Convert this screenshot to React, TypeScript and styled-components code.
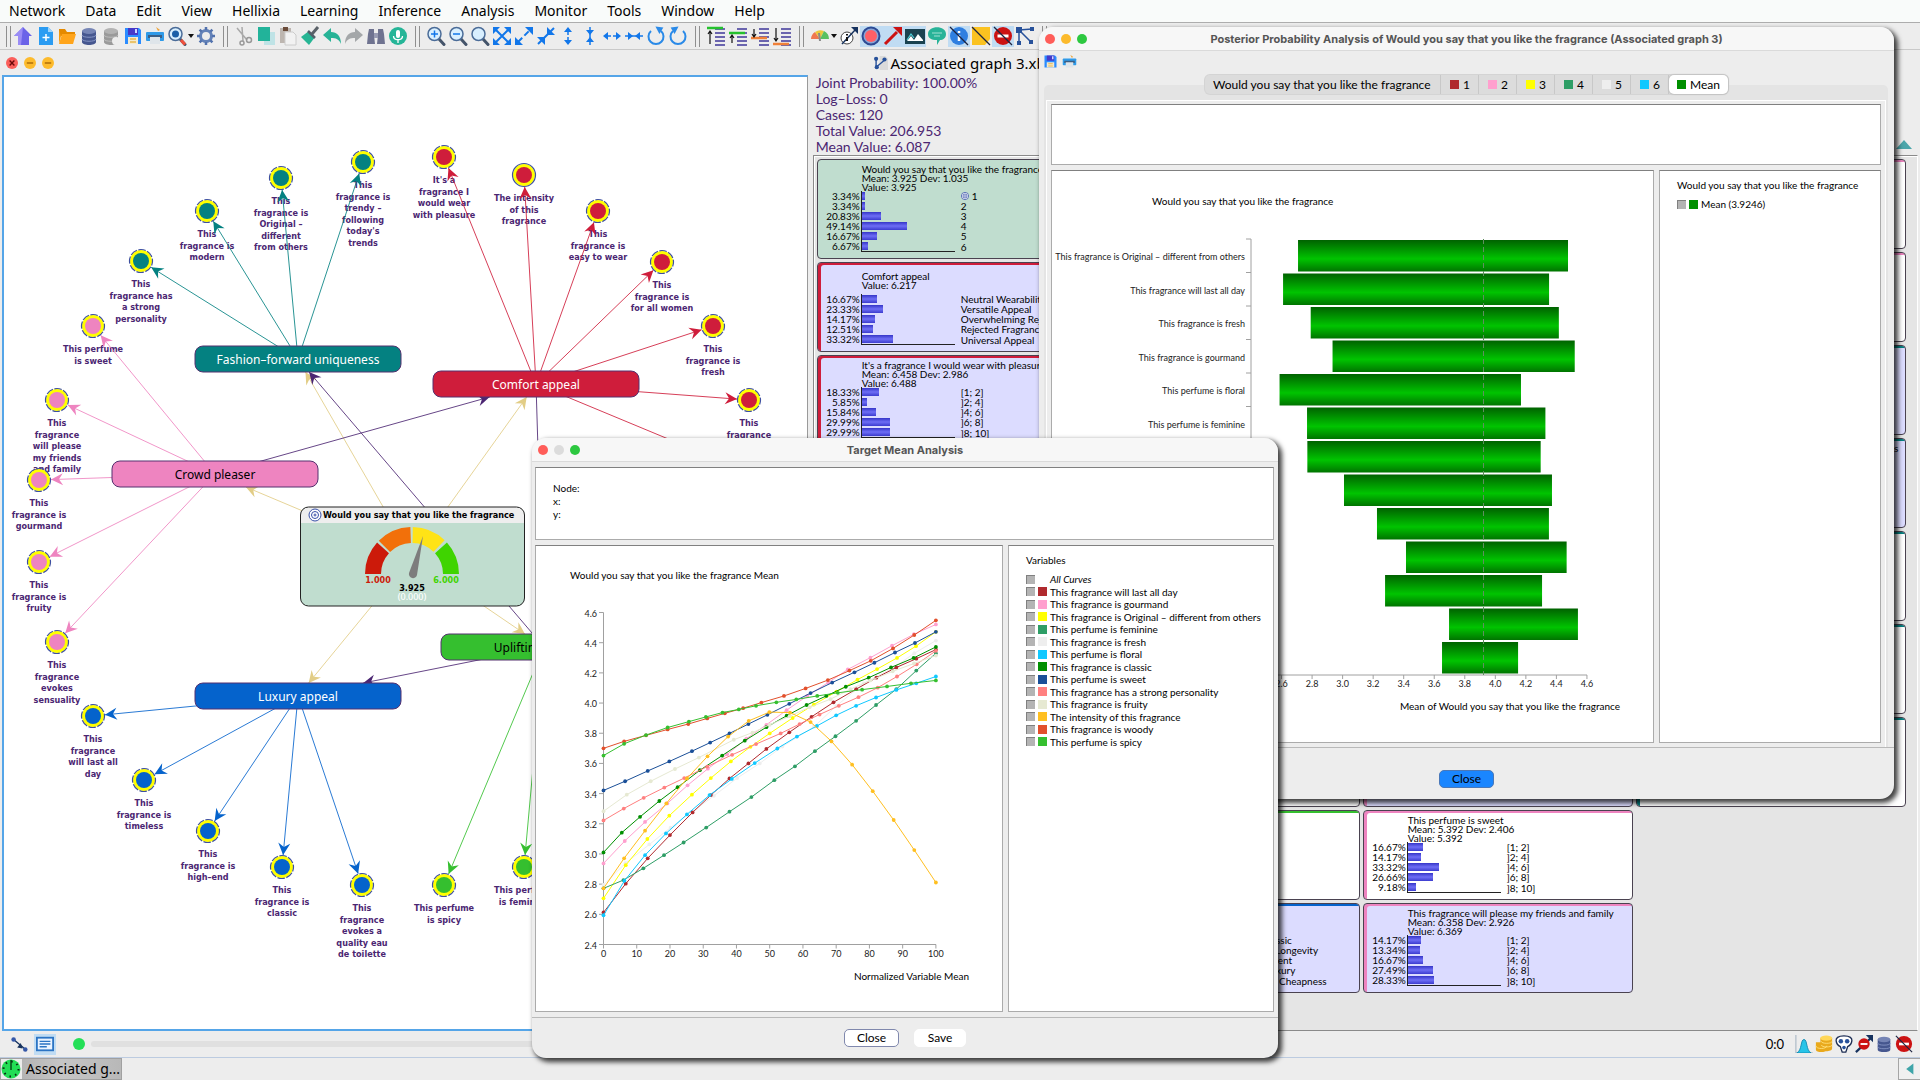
import React from "react";
import styled, { createGlobalStyle } from "styled-components";

const UI = `Lato, "Noto Sans", sans-serif`;
const NOTO = `"Noto Sans", Lato, sans-serif`;
const BOLD = `"DejaVu Sans Condensed", "DejaVu Sans", sans-serif`;
const PURPLE = "#4b2672";

const Global = createGlobalStyle`
  *, *::before, *::after { box-sizing: border-box; }
  body { margin: 0; background: #ededed; font-family: ${UI}; color: #000; overflow: hidden; }
  button { font-family: inherit; color: inherit; }
  ul { list-style: none; margin: 0; padding: 0; }
`;

/* ---------- application shell ---------- */

const Shell = styled.div`
  position: relative;
  display: flex;
  flex-direction: column;
  height: 100vh;
  overflow: hidden;
`;

const MenuBar = styled.nav`
  display: flex;
  align-items: center;
  gap: 20px;
  height: 23px;
  flex: none;
  padding: 0 9px;
  background: #f9fbfa;
  border-bottom: 1px solid #adadad;
`;

const MenuItem = styled.button`
  border: 0;
  padding: 0;
  background: none;
  font: 14px/22px ${NOTO};
`;

const ToolBar = styled.div`
  display: flex;
  align-items: center;
  height: 27px;
  flex: none;
  padding-left: 4px;
  border-bottom: 1px solid #c9c9c9;
`;

const Grip = styled.span<{ $w?: number }>`
  display: flex;
  justify-content: center;
  width: ${(p) => p.$w ?? 16}px;
  height: 21px;
  &::before {
    content: "";
    width: 5px;
    border: solid #8f8f8f;
    border-width: 0 1px;
  }
`;

const ToolButton = styled.button<{ $on?: boolean }>`
  display: flex;
  align-items: center;
  justify-content: center;
  gap: 1px;
  min-width: 22px;
  height: 21px;
  border: 0;
  padding: 0 1px;
  background: ${(p) => (p.$on ? "#c0dcf3" : "transparent")};
`;

const Caret = styled.span`
  border: 3px solid transparent;
  border-top: 4px solid #111;
  border-bottom: 0;
`;

const FrameTitle = styled.header`
  display: grid;
  grid-template-columns: 1fr auto 1fr;
  align-items: center;
  height: 25px;
  flex: none;
  padding: 0 2px 0 6px;
`;

const Dots = styled.div`
  display: flex;
  gap: 6px;
`;

const FrameDot = styled.button<{ $c: string }>`
  display: flex;
  align-items: center;
  justify-content: center;
  width: 12px;
  height: 12px;
  border: 0;
  padding: 0;
  border-radius: 50%;
  background: ${(p) => p.$c};
`;

const FrameName = styled.h1`
  display: flex;
  align-items: center;
  gap: 2px;
  margin: 0;
  font: 15px/24px ${NOTO};
`;

const Work = styled.main`
  display: flex;
  flex: 1;
  min-height: 0;
  padding: 0 2px;
`;

const Canvas = styled.section`
  width: calc(42% + 1px);
  flex: none;
  background: #fff;
  border: 2px solid #55a5e8;
  border-right: 1px solid #9a9a9a;
  overflow: hidden;
  svg { display: block; }
`;

const Side = styled.aside`
  display: flex;
  flex-direction: column;
  flex: 1;
  min-width: 0;
  padding-left: 5px;
`;

const Stats = styled.div`
  display: flex;
  justify-content: space-between;
  align-items: flex-end;
  padding: 0 6px 0 3px;
  font: 14px/16px ${UI};
  color: ${PURPLE};
`;

const Up = styled.button`
  width: 16px;
  height: 9px;
  margin-bottom: 6px;
  border: 0;
  padding: 0;
  background: #4ba6ab;
  clip-path: polygon(50% 0, 100% 100%, 0 100%);
`;

const Monitors = styled.div`
  display: flex;
  align-items: flex-start;
  gap: 3px;
  flex: 1;
  min-height: 0;
  padding: 3px;
  background: #e5e5e5;
  border: 1px solid #8a8a8a;
  border-right-color: #fff;
  box-shadow: inset 1px 1px 0 #fff;
  overflow: hidden;
`;

const Column = styled.div`
  display: flex;
  flex-direction: column;
  gap: 3px;
  width: 270px;
  flex: none;
`;

const Card = styled.article<{ $c?: string; $bg: string; $rows?: number }>`
  width: 100%;
  height: ${(p) => ((p.$rows ?? 5) > 5 ? 100 : 90)}px;
  flex: none;
  border: 1px solid #4a4250;
  border-radius: 4px;
  background: ${(p) => p.$bg};
  box-shadow: inset 3px 2px 0 ${(p) => p.$c ?? "transparent"};
  font: 10px/10px ${UI};
  overflow: hidden;
  white-space: nowrap;
`;

const CardHead = styled.div`
  display: flex;
  flex-direction: column;
  justify-content: center;
  height: 31px;
  padding: 5px 0 0 44px;
  line-height: 9px;
`;

const Row = styled.li`
  display: grid;
  grid-template-columns: 42px 94px auto;
  column-gap: 1px;
  height: 10px;
  &:last-child > :nth-child(2) { border-bottom: 1px solid #222; height: 11px; }
`;

const Pct = styled.span`
  text-align: right;
`;

const Track = styled.span`
  border-left: 1px solid #222;
  padding-top: 1px;
`;

const Fill = styled.span`
  display: block;
  height: 8px;
  background: linear-gradient(#3535c8, #6e6ef5 50%, #3c3ccf);
`;

const State = styled.span`
  display: flex;
  align-items: center;
  gap: 3px;
  padding-left: 5px;
`;

const StatusBar = styled.footer`
  display: flex;
  align-items: center;
  height: 27px;
  flex: none;
  padding: 0 7px 0 8px;
  border-bottom: 1px solid #bccbe0;
`;

const Rail = styled.div`
  width: 40%;
  height: 6px;
  margin-left: 6px;
  border-radius: 3px;
  background: #e0e0e0;
`;

const Knob = styled.span`
  width: 12px;
  height: 12px;
  margin-left: 17px;
  border-radius: 50%;
  background: #24df57;
`;

const Tray = styled.div`
  display: flex;
  align-items: center;
  margin-left: auto;
  font: 13px/20px ${UI};
  svg { margin-left: 2px; }
  span { margin-right: 9px; }
`;

const TaskBar = styled.footer`
  display: flex;
  justify-content: space-between;
  height: 22px;
  flex: none;
`;

const Task = styled.button`
  display: flex;
  align-items: center;
  gap: 4px;
  width: 122px;
  height: 22px;
  border: 1px solid #a0a0a0;
  padding: 0;
  background: linear-gradient(90deg, #aaa, #c6c6c6 50%, #b8b8b8);
  font: 14px/20px ${NOTO};
  white-space: nowrap;
`;

const TaskIcon = styled.span`
  display: flex;
  width: 21px;
  height: 20px;
  background: #ebebeb;
`;

const Corner = styled.button`
  display: flex;
  align-items: center;
  justify-content: flex-end;
  width: 22px;
  border: 1px solid #a5a5a5;
  border-width: 1px 0 1px 1px;
  padding: 0 5px;
  background: #f0f0f0;
`;

/* ---------- floating windows ---------- */

const Win = styled.section<{ $x: number; $y: number; $w: number; $h: number }>`
  position: absolute;
  left: ${(p) => p.$x}px;
  top: ${(p) => p.$y}px;
  width: ${(p) => p.$w}px;
  min-height: ${(p) => p.$h}px;
  display: flex;
  flex-direction: column;
  border-radius: 14px;
  background: #ededed;
  box-shadow: 3px 3px 5px 1px rgba(0, 0, 0, 0.75);
  overflow: hidden;
`;

const WinBar = styled.header`
  display: grid;
  grid-template-columns: 1fr auto 1fr;
  align-items: center;
  height: 24px;
  flex: none;
  padding: 0 6px;
  background: #f7f7f7;
  border-bottom: 1px solid #dadada;
`;

const WinTitle = styled.h2`
  margin: 0;
  font: 700 11px/22px Inter, sans-serif;
  color: #555;
`;

const Light = styled.button<{ $c: string }>`
  width: 10px;
  height: 10px;
  border: 0;
  padding: 0;
  border-radius: 50%;
  background: ${(p) => p.$c};
`;

const WinTools = styled.div`
  display: flex;
  gap: 4px;
  height: 24px;
  padding: 3px 4px;
`;

const ToolIcon = styled.button`
  display: flex;
  border: 0;
  padding: 0;
  background: none;
`;

const TabBar = styled.div`
  position: relative;
  z-index: 1;
  display: flex;
  align-self: center;
  height: 19px;
  margin-bottom: -9px;
  border-radius: 5px;
  background: #dcdcdc;
  box-shadow: 0 0 0 1px #d4d4d4;
`;

const Tab = styled.button<{ $on?: boolean; $wide?: boolean }>`
  display: flex;
  align-items: center;
  justify-content: ${(p) => (p.$wide ? "flex-start" : "center")};
  gap: 4px;
  min-width: ${(p) => (p.$wide ? 236 : 38)}px;
  border: 0;
  padding: 0 8px;
  border-radius: ${(p) => (p.$on ? 5 : 0)}px;
  background: ${(p) => (p.$on ? "#fff" : "transparent")};
  box-shadow: ${(p) => (p.$on ? "0 0 1px 1px #c4c4c4" : "inset -1px 0 0 #c8c8c8")};
  font: 12px/19px ${UI};
`;

const Swatch = styled.i<{ $c: string }>`
  display: block;
  width: 9px;
  height: 9px;
  flex: none;
  background: ${(p) => p.$c};
`;

const Group = styled.div`
  display: flex;
  flex: 1;
  margin: 0 6px 0 5px;
  padding: 15px 2px 0;
  border-radius: 5px 5px 0 0;
  background: #e4e4e4;
`;

const Panes = styled.div<{ $boxed?: boolean }>`
  display: flex;
  flex-direction: column;
  flex: 1;
  gap: 5px;
  padding: ${(p) => (p.$boxed ? "3px 4px 4px" : "5px 4px 5px 3px")};
  background: #ededed;
  border: solid #fff;
  border-width: ${(p) => (p.$boxed ? "1px 1px 0" : "0")};
`;

const Split = styled.div<{ $side: number }>`
  display: grid;
  grid-template-columns: 1fr ${(p) => p.$side}px;
  gap: 5px;
  flex: 1;
`;

const Pane = styled.div<{ $h?: number }>`
  height: ${(p) => (p.$h ? p.$h + "px" : "auto")};
  background: #fff;
  border: 1px solid #ababab;
  border-top-color: #808080;
  overflow: hidden;
  svg { display: block; }
`;

const Readout = styled.div`
  padding: 14px 17px;
  font: 10px/13px ${UI};
`;

const Legend = styled.fieldset`
  margin: 0;
  border: 0;
  padding: 8px 0 0 17px;
  font: 10px/12px ${UI};
  white-space: nowrap;
  legend { float: left; width: 100%; padding: 0; margin-bottom: 7px; }
`;

const LegendList = styled.ul<{ $h: number }>`
  clear: both;
  display: grid;
  grid-auto-rows: 1fr;
  height: ${(p) => p.$h}px;
`;

const LegendItem = styled.label<{ $italic?: boolean }>`
  display: flex;
  align-items: center;
  gap: 3px;
  font-style: ${(p) => (p.$italic ? "italic" : "normal")};
`;

const Check = styled.input`
  appearance: none;
  width: 9px;
  height: 9px;
  margin: 0;
  background: #b4b4b4;
  border: solid #808080;
  border-width: 1px 0 0 1px;
`;

const WinFoot = styled.footer<{ $h: number; $drop?: number }>`
  display: flex;
  align-items: center;
  justify-content: center;
  gap: 15px;
  height: ${(p) => p.$h}px;
  padding-top: ${(p) => p.$drop ?? 0}px;
  flex: none;
  border-top: 1px solid #b9b9b9;
`;

const Push = styled.button<{ $kind?: "blue" | "ring" }>`
  height: 18px;
  min-width: 52px;
  padding: 0 12px;
  border: 1px solid ${(p) => (p.$kind === "blue" ? "#4a78b8" : p.$kind === "ring" ? "#8088ad" : "#fff")};
  border-radius: 5px;
  background: ${(p) => (p.$kind === "blue" ? "#1a86ff" : "#fff")};
  font: 12px/16px ${UI};
`;

/* ---------- icons ---------- */

const Ico = ({ s = 20, children }: { s?: number; children: React.ReactNode }) => (
  <svg width={s} height={s} viewBox="0 0 20 20" fill="none" aria-hidden="true">
    {children}
  </svg>
);

const Disk = (
  <>
    <path d="M2 2h14l2 2v14H2z" fill="#2b8cff" />
    <path d="M5 2h10v7H5z" fill="#4538c8" />
    <path d="M12 3h2v4h-2z" fill="#cfd8ff" />
    <path d="M5 11h10v7H5z" fill="#f3ead0" />
    <path d="M7 13h6M7 16h6" stroke="#e8b64a" strokeWidth="1.5" />
  </>
);
const Printer = (
  <>
    <path d="M5 2h9l1 6H5z" fill="#e9eef2" />
    <path d="M11 1l4 3-2 1z" fill="#f0a030" />
    <rect x="1" y="6" width="18" height="9" rx="1" fill="#2f9ae8" />
    <path d="M3 9h14v3H3z" fill="#3b5f86" />
    <path d="M5 11h10v7H5z" fill="#dfe5ea" />
  </>
);
const Db = (
  <>
    <path d="M3 5v11c0 4 14 4 14 0V5z" fill="#46578f" />
    <ellipse cx="10" cy="5" rx="7" ry="3" fill="#7685b5" />
    <path d="M3 9c0 3 14 3 14 0M3 13c0 3 14 3 14 0" stroke="#8594c4" />
  </>
);
const lens = (inner: React.ReactNode) => (
  <>
    <path d="M13 13l5 5.500" stroke="#44546a" strokeWidth="3" strokeLinecap="round" />
    <circle cx="8.500" cy="8" r="6.500" fill="#d8efff" stroke="#4b6c98" strokeWidth="1.500" />
    {inner}
  </>
);
const BLUE = "#1277ea";
const NoEntry = (
  <>
    <circle cx="10" cy="10" r="9" fill="#cc1212" />
    <path d="M4.500 8.500h11v3h-11z" fill="#fff" />
  </>
);
const bars = (top: string, at: number, arrow: string) => (
  <>
    <path d="M9 3h10M9 7h10M9 11h10M9 15h10M9 19h10" stroke="#6a64ae" strokeWidth="2" />
    <path d={`M${at ? 3 : 1} ${top === "o" ? 18 : top === "O" ? 12 : top === "G" ? 7 : 2}h16`} stroke={top.toLowerCase() === "g" ? "#25c12d" : "#f08038"} strokeWidth="2.500" />
    <path d={arrow} stroke="#111" strokeWidth="1.200" />
  </>
);
const Clip = <path d="M1 1l18 18" stroke="#1d2440" strokeWidth="1.300" />;

type Tool = { n: string; i: React.ReactNode; on?: boolean; menu?: boolean };
const GROUPS: Tool[][] = [
  [
    { n: "Home", i: <><path d="M10 1l9 9h-3v9H5v-9H1z" fill="#6b63e8" /><path d="M10 1L1 10h4v9h3z" fill="#9a8cf6" /></> },
    { n: "New", i: <><path d="M4 1h9l5 5v13H4z" fill="#2b9cf2" /><path d="M13 1l5 5h-5z" fill="#9fd4fb" /><path d="M11 8v7M7.500 11.500h7" stroke="#fff" strokeWidth="1.500" /></> },
    { n: "Open", i: <><path d="M2 3h6l2 3h8v4H2z" fill="#e58a00" /><path d="M2 18l3-10h14l-3 10z" fill="#ffa51c" /><path d="M2 18V4l2 6z" fill="#f39a10" /></> },
    { n: "Database", i: Db },
    { n: "Export database", i: <g opacity=".55"><g style={{ filter: "grayscale(1)" }}>{Db}</g><circle cx="15" cy="15" r="4" fill="#eee" /></g> },
    { n: "Save", i: Disk },
    { n: "Print", i: Printer },
    { n: "Inspect", menu: true, i: <>{lens(<circle cx="8.500" cy="8" r="3.500" fill="#1b5fa8" />)}<path d="M14 14l4 4.500" stroke="#f0503c" strokeWidth="3" /></> },
    { n: "Settings", i: <><circle cx="10" cy="10" r="5.500" stroke="#6382b8" strokeWidth="3" /><path d="M10 1v3M10 16v3M1 10h3M16 10h3M3.600 3.600l2 2M14.400 14.400l2 2M3.600 16.400l2-2M14.400 5.600l2-2" stroke="#5272ad" strokeWidth="2.500" /></> },
  ],
  [
    { n: "Cut", i: <><path d="M3 2l10 12M8 1l1 14" stroke="#a9a9a9" strokeWidth="1.500" /><circle cx="15" cy="14" r="2.500" stroke="#999" strokeWidth="1.500" /><circle cx="8" cy="17" r="2" stroke="#999" strokeWidth="1.500" /></> },
    { n: "Copy", i: <><path d="M8 6h11v13H8z" fill="#bfe3e6" /><path d="M2 1h12v14H2z" fill="#22b39a" /></> },
    { n: "Paste", i: <><path d="M2 2h11v15H2z" fill="#bdb6b0" /><path d="M5 1h5v4H5z" fill="#6b4c3a" /><path d="M7 6h8l3 3v10H7z" fill="#f2f2f2" stroke="#ccc" /></> },
    { n: "Format", i: <><path d="M12 8l6-7" stroke="#5a6168" strokeWidth="3" /><path d="M9 5l6 6-6 8-8-8z" fill="#26b594" /><path d="M8 5l7 7" stroke="#53606a" strokeWidth="2.500" /></> },
    { n: "Undo", i: <path d="M1 9l8-7v4c6 0 10 4 10 12-2-5-5-6-10-6v4z" fill="#27b396" /> },
    { n: "Redo", i: <path d="M19 9l-8-7v4C5 6 1 10 1 18c2-5 5-6 10-6v4z" fill="#a4a7a9" /> },
    { n: "Find", i: <><path d="M3 3h5v6l1 9H1l1-10zM12 3h5l1 5 1 10h-8l1-9z" fill="#6f7390" /><path d="M8 7h4v5H8z" fill="#9a9db4" /></> },
    { n: "Voice", i: <><circle cx="10" cy="10" r="9" fill="#25b597" /><rect x="8" y="4" width="4" height="8" rx="2" fill="#fff" /><path d="M5.500 10c0 5 9 5 9 0M10 14v3" stroke="#fff" strokeWidth="1.300" /></> },
  ],
  [
    { n: "Zoom in", i: lens(<path d="M5 8h7M8.500 4.500v7" stroke={BLUE} strokeWidth="1.500" />) },
    { n: "Zoom out", i: lens(<path d="M5 8h7" stroke={BLUE} strokeWidth="1.500" />) },
    { n: "Zoom reset", i: lens(null) },
    { n: "Fit", i: <><path d="M3 3l14 14M17 3L3 17" stroke={BLUE} strokeWidth="2" /><path d="M1 1h7L1 8zM19 1v7l-7-7zM1 19v-7l7 7zM19 19h-7l7-7z" fill={BLUE} /></> },
    { n: "Expand", i: <><path d="M4 16L16 4" stroke={BLUE} strokeWidth="2" strokeDasharray="6 3" /><path d="M19 1v8l-8-8zM1 19v-8l8 8z" fill={BLUE} /></> },
    { n: "Shrink", i: <><path d="M2 18L18 2" stroke={BLUE} strokeWidth="2" /><path d="M9 11v8l-8-8zM11 9V1l8 8z" fill={BLUE} /></> },
    { n: "Taller", i: <><path d="M10 4v12" stroke={BLUE} strokeWidth="1.500" strokeDasharray="5 2" /><path d="M10 1l4 5H6zM10 19l4-5H6z" fill={BLUE} /></> },
    { n: "Shorter", i: <><path d="M10 1v18" stroke={BLUE} strokeWidth="1.500" /><path d="M10 9l4-5H6zM10 11l4 5H6z" fill={BLUE} /></> },
    { n: "Wider", i: <><path d="M4 10h12" stroke={BLUE} strokeWidth="1.500" strokeDasharray="5 2" /><path d="M1 10l5-4v8zM19 10l-5-4v8z" fill={BLUE} /></> },
    { n: "Narrower", i: <><path d="M1 10h18" stroke={BLUE} strokeWidth="1.500" /><path d="M9 10L4 6v8zM11 10l5-4v8z" fill={BLUE} /></> },
    { n: "Rotate left", i: <><path d="M5 5a7.500 7.500 0 1 0 10 0" stroke="#2a8ae8" strokeWidth="2" /><path d="M9 1h8l-3 7z" fill="#2a8ae8" transform="rotate(8 13 4)" /></> },
    { n: "Rotate right", i: <><path d="M15 5A7.500 7.500 0 1 1 5 5" stroke="#2a8ae8" strokeWidth="2" /><path d="M11 1H3l3 7z" fill="#2a8ae8" transform="rotate(-8 7 4)" /></> },
  ],
  [
    { n: "Align top", i: bars("g", 0, "M4 18V6M2 8l2-3 2 3") },
    { n: "Move up", i: bars("G", 0, "M4 17v-7M2 12l2-3 2 3") },
    { n: "Move down", i: bars("O", 0, "M4 3v7M2 8l2 3 2-3") },
    { n: "Align bottom", i: bars("o", 0, "M4 2v13M2 12l2 3 2-3") },
  ],
  [
    { n: "Gauge", menu: true, i: <><path d="M1 13a9 9 0 0 1 4-7l5 7z" fill="#f07850" /><path d="M5 6a9 9 0 0 1 9-1l-4 8z" fill="#ecc83a" /><path d="M14 5a9 9 0 0 1 5 8h-9z" fill="#58c060" /><path d="M10 15l-1-8" stroke="#8a8a8a" strokeWidth="2" /></> },
    { n: "Arc info", i: <><circle cx="8" cy="12" r="6" fill="#fff" stroke="#444" /><path d="M3 18L17 3" stroke="#16325e" strokeWidth="1.500" /><path d="M19 1v7l-7-7z" fill="#16325e" /><path d="M8 11v4M8 8v1.500" stroke="#111" strokeWidth="2" /></> },
    { n: "Nodes", on: true, i: <><circle cx="10" cy="10" r="8.500" fill="#8aa4d4" stroke="#2c4a94" strokeWidth="2" /><circle cx="10" cy="10" r="6" fill="#ff5f66" /></> },
    { n: "Arcs", on: true, i: <><path d="M2 18L14 6" stroke="#cc1212" strokeWidth="3" /><path d="M19 1v9l-9-9z" fill="#cc1212" /></> },
    { n: "Image", on: true, i: <><path d="M0 3h20v15H0z" fill="#1a4250" /><path d="M2 15l4-5 3 4 4-6 5 6v1z" fill="#fff" /><path d="M2 14l4-6 3 4" stroke="#4fd0d8" strokeWidth="1.200" /></> },
    { n: "Comment", i: <><path d="M1 8c0-9 18-9 18 0 0 4-3 6-6 6l-3 5v-5C4 14 1 12 1 8z" fill="#28b398" /><path d="M5 7h10M7 10h6" stroke="#9fe0d2" /></> },
    { n: "Info", on: true, i: <><circle cx="10" cy="10" r="9" fill="#2f7fe0" /><path d="M10 9v6M10 5v2" stroke="#fff" strokeWidth="2.500" />{Clip}</> },
    { n: "Note", i: <><path d="M1 1h18v12l-5 6H1z" fill="#fbc220" />{Clip}</> },
    { n: "Forbidden", on: true, i: <>{NoEntry}{Clip}</> },
    { n: "Tree", i: <><path d="M4 4v13M4 4l13-1M4 4l12 12" stroke="#27519a" strokeWidth="1.500" /><path d="M1 1h6v6H1zM15 1h4v4h-4zM2 15h4v4H2zM14 14h4v4h-4z" fill="#27519a" /></> },
  ],
];

const Target = ({ s = 9 }: { s?: number }) => (
  <Ico s={s}>
    <circle cx="10" cy="10" r="9" fill="#fff" stroke="#3850a8" strokeWidth="2" />
    <circle cx="10" cy="10" r="5" stroke="#3850a8" strokeWidth="2" />
    <circle cx="10" cy="10" r="2" fill="#3850a8" />
  </Ico>
);

/* ---------- network graph ---------- */

const TEAL = "#048181", RED = "#cf1d3b", PINK = "#ee84c0", SEA = "#0563cc", LIME = "#35bf2f";

type Hub = { x: number; y: number; c: string; ink: string; t: string };
const HUBS: Record<string, Hub> = {
  fashion: { x: 298, y: 359, c: TEAL, ink: "#fff", t: "Fashion–forward uniqueness" },
  comfort: { x: 536, y: 384, c: RED, ink: "#fff", t: "Comfort appeal" },
  crowd: { x: 215, y: 474, c: PINK, ink: "#000", t: "Crowd pleaser" },
  luxury: { x: 298, y: 696, c: SEA, ink: "#fff", t: "Luxury appeal" },
  uplift: { x: 544, y: 647, c: LIME, ink: "#000", t: "Uplifting radiance" },
};

const LEAVES: [string, number, number, string][] = [
  ["fashion", 141, 261, "This|fragrance has|a strong|personality"],
  ["fashion", 207, 211, "This|fragrance is|modern"],
  ["fashion", 281, 178, "This|fragrance is|Original –|different|from others"],
  ["fashion", 363, 162, "This|fragrance is|trendy –|following|today's|trends"],
  ["comfort", 444, 157, "It's a|fragrance I|would wear|with pleasure"],
  ["comfort", 524, 175, "The intensity|of this|fragrance"],
  ["comfort", 598, 211, "This|fragrance is|easy to wear"],
  ["comfort", 662, 262, "This|fragrance is|for all women"],
  ["comfort", 713, 326, "This|fragrance is|fresh"],
  ["comfort", 749, 400, "This|fragrance|is woody"],
  ["comfort", 767, 480, "This perfume|is floral"],
  ["crowd", 93, 326, "This perfume|is sweet"],
  ["crowd", 57, 400, "This|fragrance|will please|my friends|and family"],
  ["crowd", 39, 480, "This|fragrance is|gourmand"],
  ["crowd", 39, 562, "This|fragrance is|fruity"],
  ["crowd", 57, 642, "This|fragrance|evokes|sensuality"],
  ["luxury", 93, 716, "This|fragrance|will last all|day"],
  ["luxury", 144, 780, "This|fragrance is|timeless"],
  ["luxury", 208, 831, "This|fragrance is|high–end"],
  ["luxury", 282, 867, "This|fragrance is|classic"],
  ["luxury", 362, 885, "This|fragrance|evokes a|quality eau|de toilette"],
  ["uplift", 444, 885, "This perfume|is spicy"],
  ["uplift", 524, 867, "This perfume|is feminine"],
];

const TAN = "#e2cd86";
const LINKS: [number, number, string, string][] = [
  [412, 557, "fashion", TAN], [412, 557, "comfort", TAN], [412, 557, "crowd", TAN],
  [412, 557, "luxury", TAN], [412, 557, "uplift", TAN],
  [215, 474, "comfort", PURPLE], [544, 647, "fashion", PURPLE],
  [536, 384, "uplift", PURPLE], [544, 647, "luxury", PURPLE],
];

const Arrow = ({ x1, y1, x2, y2, c }: { x1: number; y1: number; x2: number; y2: number; c: string }) => {
  const a = (Math.atan2(y2 - y1, x2 - x1) * 180) / Math.PI;
  return (
    <g stroke="none">
      <line x1={x1} y1={y1} x2={x2} y2={y2} stroke={c} strokeWidth="1" strokeOpacity=".85" />
      <path d="M0 0L-12 -6L-8 0L-12 6Z" fill={c} transform={`translate(${x2} ${y2}) rotate(${a})`} />
    </g>
  );
};

const rectHit = (x: number, y: number, h: Hub) => {
  const dx = x - h.x, dy = y - h.y;
  const k = Math.min(103 / Math.abs(dx || 1), 13 / Math.abs(dy || 1));
  return { x2: h.x + dx * k, y2: h.y + dy * k };
};

const arc = (a0: number, a1: number) => {
  const p = (r: number, a: number) => `${412 + r * Math.cos((a * Math.PI) / 180)} ${574 - r * Math.sin((a * Math.PI) / 180)}`;
  return `M${p(47, a0)}A47 47 0 0 1 ${p(47, a1)}L${p(31, a1)}A31 31 0 0 0 ${p(31, a0)}Z`;
};

const Graph = () => (
  <svg width="804" height="952" viewBox="4 77 804 952" role="img" aria-label="Bayesian network">
    <g fontFamily={BOLD} fontSize="9" fontWeight="700" fill={PURPLE} textAnchor="middle">
      {LEAVES.map(([, x, y, t]) =>
        t.split("|").map((l, i) => (
          <text key={x + l + y} x={x} y={Math.round(y + 26 + i * 11.5)}>{l}</text>
        )),
      )}
    </g>
    {LINKS.map(([x, y, to, c]) => (
      <Arrow key={x + to + c} x1={x} y1={y} {...rectHit(x, y, HUBS[to])} c={c} />
    ))}
    {LEAVES.map(([h, x, y]) => {
      const { x: hx, y: hy, c } = HUBS[h];
      const d = Math.hypot(x - hx, y - hy), k = 1 - 12 / d;
      return <Arrow key={`${x} ${y}`} x1={hx} y1={hy} x2={hx + (x - hx) * k} y2={hy + (y - hy) * k} c={c} />;
    })}
    {LEAVES.map(([h, x, y], i) => (
      <g key={`n${x} ${y}`}>
        <circle cx={x} cy={y} r="11" fill="#ff0" />
        <circle cx={x} cy={y} r="8" fill={HUBS[h].c} />
        <circle cx={x} cy={y} r="11.500" fill="none" stroke="#3d4fa0" strokeWidth="1.200" strokeDasharray={i === 5 ? undefined : "7.500 1.530"} strokeDashoffset="3" />
      </g>
    ))}
    {Object.values(HUBS).map((h) => (
      <g key={h.t}>
        <rect x={h.x - 103} y={h.y - 13} width="206" height="26" rx="8" fill={h.c} stroke="#54306f" />
        <text x={h.x} y={h.y + 5} textAnchor="middle" fontFamily={NOTO} fontSize="12" fill={h.ink}>{h.t}</text>
      </g>
    ))}
    <rect x="300.500" y="507" width="224" height="99" rx="8" fill="#c0ddcf" />
    <path d="M300.500 523V515a8 8 0 0 1 8-8h208a8 8 0 0 1 8 8v8z" fill="#eee" />
    <rect x="300.500" y="507" width="224" height="99" rx="8" fill="none" stroke="#222" />
    <g fill="none" stroke="#3850a8">
      <circle cx="315" cy="515" r="6" fill="#fff" />
      <circle cx="315" cy="515" r="3.500" />
      <circle cx="315" cy="515" r="1" />
    </g>
    <text x="323" y="518" fontFamily={BOLD} fontSize="9" fontWeight="700">Would you say that you like the fragrance</text>
    <path d={arc(180, 138)} fill="#cc1a0a" />
    <path d={arc(135, 92)} fill="#f2700a" />
    <path d={arc(89, 46)} fill="#ffe316" />
    <path d={arc(42, 0)} fill="#3fd400" />
    <path d="M423 536l-6 39a4 4 0 0 1-8-2z" fill="#7d7d7d" />
    <g fontFamily={BOLD} fontSize="9" fontWeight="700" textAnchor="middle">
      <text x="378" y="583" fill="#cc1a0a">1.000</text>
      <text x="446" y="583" fill="#3fd400">6.000</text>
      <text x="412" y="591">3.925</text>
      <text x="412" y="600" fill="#fff" fontFamily={NOTO} fontWeight="500">(0.000)</text>
    </g>
  </svg>
);

/* ---------- monitor cards ---------- */

type CardData = { c?: string; bg?: string; head?: string[]; rows?: [string, string][]; mark?: boolean };
const LAV = "#dcdcff";
const BINS = ["[1; 2]", "]2; 4]", "]4; 6]", "]6; 8]", "]8; 10]"];
const binned = (p: string[]): [string, string][] => p.map((v, i) => [v, BINS[i]]);

const COLUMNS: CardData[][] = [
  [
    {
      bg: "#c0ddcf", mark: true,
      head: ["Would you say that you like the fragrance", "Mean: 3.925 Dev: 1.035", "Value: 3.925"],
      rows: [["3.34", "1"], ["3.34", "2"], ["20.83", "3"], ["49.14", "4"], ["16.67", "5"], ["6.67", "6"]],
    },
    {
      c: RED, bg: LAV, head: ["Comfort appeal", "Value: 6.217"],
      rows: [["16.67", "Neutral Wearability"], ["23.33", "Versatile Appeal"], ["14.17", "Overwhelming Reject"], ["12.51", "Rejected Fragrance"], ["33.32", "Universal Appeal"]],
    },
    {
      c: RED, bg: LAV, head: ["It's a fragrance I would wear with pleasure", "Mean: 6.458 Dev: 2.986", "Value: 6.488"],
      rows: binned(["18.33", "5.85", "15.84", "29.99", "29.99"]),
    },
    { c: RED }, { c: RED }, { c: RED }, { c: RED }, { c: RED }, { c: RED },
  ],
  [
    { c: LIME }, { c: LIME }, { c: LIME }, { c: LIME }, { c: LIME }, { c: LIME }, { c: LIME }, { c: LIME },
    {
      c: SEA, bg: LAV, head: ["Luxury appeal"],
      rows: [["20.00", "Iconic Classic"], ["20.00", "Enduring Longevity"], ["20.00", "Lasting Scent"], ["20.00", "Simple Luxury"], ["20.00", "Perceived Cheapness"]],
    },
  ],
  [
    { c: SEA }, { c: SEA }, { c: SEA }, { c: SEA }, { c: SEA }, { c: SEA }, { c: PINK, bg: LAV },
    { c: PINK, head: ["This perfume is sweet", "Mean: 5.392 Dev: 2.406", "Value: 5.392"], rows: binned(["16.67", "14.17", "33.32", "26.66", "9.18"]) },
    { c: PINK, bg: LAV, head: ["This fragrance will please my friends and family", "Mean: 6.358 Dev: 2.926", "Value: 6.369"], rows: binned(["14.17", "13.34", "16.67", "27.49", "28.33"]) },
  ],
  [
    { c: PINK }, { c: PINK }, { c: TEAL, bg: LAV },
    { c: TEAL, bg: LAV, head: ["This fragrance is trendy – following today's trends", "", ""] },
    { c: TEAL }, { c: TEAL }, { c: TEAL },
  ],
];

const Monitor = ({ d }: { d: CardData }) => (
  <Card $c={d.c} $bg={d.bg ?? "#fff"} $rows={d.rows?.length}>
    {d.head && (
      <CardHead>
        {d.head.map((h, i) => <span key={i}>{h || "\u00a0"}</span>)}
      </CardHead>
    )}
    {d.rows && (
      <ul>
        {d.rows.map(([p, s], i) => (
          <Row key={s}>
            <Pct>{p}%</Pct>
            <Track><Fill style={{ width: `${p}%` }} /></Track>
            <State>{d.mark && i === 0 && <Target s={8} />}{s}</State>
          </Row>
        ))}
      </ul>
    )}
  </Card>
);

/* ---------- range chart ---------- */

const RANGES: [string, number, number][] = [
  ["This fragrance is Original – different from others", 2.708, 4.476],
  ["This fragrance will last all day", 2.61, 4.352],
  ["This fragrance is fresh", 2.791, 4.416],
  ["This fragrance is gourmand", 2.934, 4.52],
  ["This perfume is floral", 2.587, 4.168],
  ["This perfume is feminine", 2.767, 4.328],
  ["The intensity of this fragrance", 2.769, 4.297],
  ["This fragrance is classic", 3.009, 4.371],
  ["This fragrance has a strong personality", 3.225, 4.351],
  ["This perfume is sweet", 3.415, 4.467],
  ["This fragrance is fruity", 3.278, 4.306],
  ["This fragrance is woody", 3.697, 4.541],
  ["This perfume is spicy", 3.651, 4.149],
];
const TICKS = Array.from({ length: 12 }, (_, i) => 2.4 + i * 0.2);

const RangeChart = () => {
  const X = (v: number) => 199 + (v - 2.4) * 152.7;
  return (
    <svg width="602" height="570" viewBox="0 0 602 570" fontFamily={UI} role="img" aria-label="Posterior means">
      <defs>
        <linearGradient id="g" x2="0" y2="1">
          <stop offset="0" stopColor="#006200" />
          <stop offset=".6" stopColor="#00c400" />
          <stop offset="1" stopColor="#007400" />
        </linearGradient>
      </defs>
      <text x="100" y="34" fontSize="10">Would you say that you like the fragrance</text>
      <path d={`M199 68V504H535${RANGES.map((_, i) => `M194 ${68 + i * 33.5}h5`).join("")}${TICKS.map((v) => `M${X(v)} 504v4`).join("")}`} stroke="#a0a0a0" fill="none" />
      {RANGES.map(([t, a, b], i) => (
        <g key={t}>
          <text x="193" y={89 + i * 33.5} fontSize="9" textAnchor="end" fill="#222">{t}</text>
          <rect x={X(a)} y={69 + i * 33.5} width={X(b) - X(a)} height="31.500" fill="url(#g)" />
        </g>
      ))}
      <path d="M431.500 68V504" stroke="#5f8f5f" strokeDasharray="5 3" />
      {TICKS.map((v) => (
        <text key={v} x={X(v)} y="516" fontSize="9" textAnchor="middle" fill="#222">{v.toFixed(1)}</text>
      ))}
      <text x="568" y="539" fontSize="10" textAnchor="end">Mean of Would you say that you like the fragrance</text>
    </svg>
  );
};

/* ---------- curves chart ---------- */

type Curve = { n: string; c: string; x: number[]; y: number[] };
const CURVES: Curve[] = [
  { n: "This fragrance will last all day", c: "#b02a2e", x: [0, 6.7, 13.3, 20, 26.8, 32.3, 37.9, 43.6, 49, 55.9, 62.6, 69.2, 76, 82.1, 88.1, 94.1, 100], y: [2.612, 2.803, 2.971, 3.125, 3.275, 3.39, 3.5, 3.6, 3.696, 3.806, 3.909, 4.005, 4.092, 4.168, 4.236, 4.294, 4.354] },
  { n: "This fragrance is gourmand", c: "#ff9fce", x: [0, 6.4, 12.5, 19.2, 25.3, 31.4, 37.2, 43, 49, 55.1, 61.3, 67.6, 73.5, 80.3, 86.8, 93.4, 100], y: [2.937, 3.086, 3.212, 3.335, 3.455, 3.565, 3.66, 3.764, 3.856, 3.953, 4.047, 4.136, 4.223, 4.301, 4.38, 4.456, 4.521] },
  { n: "This fragrance is Original – different from others", c: "#ffff00", x: [0, 6.7, 13.2, 19.8, 26.6, 32.3, 38.3, 44.2, 50, 56.9, 63.3, 70.1, 76.4, 82.3, 88.3, 94, 100], y: [2.706, 2.926, 3.099, 3.254, 3.393, 3.503, 3.613, 3.71, 3.799, 3.901, 3.99, 4.076, 4.155, 4.225, 4.299, 4.377, 4.472] },
  { n: "This perfume is feminine", c: "#2e9e66", x: [0, 6, 12, 18.2, 24.1, 30.9, 37.9, 44.5, 51.4, 57.6, 63.6, 69.8, 76, 82, 88.1, 94.1, 100], y: [2.772, 2.827, 2.905, 2.992, 3.076, 3.175, 3.28, 3.377, 3.489, 3.581, 3.681, 3.78, 3.882, 3.987, 4.092, 4.215, 4.33] },
  { n: "This fragrance is fresh", c: "#eeeeee", x: [0, 6.6, 13.8, 20.2, 26.7, 33.2, 40.2, 47, 53.8, 63.3, 70, 78.3, 87.4, 93.5, 100], y: [2.795, 2.939, 3.063, 3.175, 3.28, 3.385, 3.503, 3.6, 3.712, 3.843, 3.98, 4.131, 4.236, 4.33, 4.414] },
  { n: "This perfume is floral", c: "#10c8ff", x: [0, 6.3, 12.5, 18.8, 25.1, 31.9, 38.6, 45.5, 52.3, 58.2, 64.2, 70, 76, 82, 88.1, 94.1, 100], y: [2.594, 2.822, 2.992, 3.136, 3.262, 3.39, 3.497, 3.602, 3.699, 3.778, 3.848, 3.919, 3.982, 4.037, 4.087, 4.131, 4.176] },
  { n: "This fragrance is classic", c: "#008f00", x: [0, 5.5, 11, 16.8, 22.3, 29, 35.7, 42.5, 49, 55.1, 61.1, 67, 72.9, 79.8, 86.5, 93.3, 100], y: [3.01, 3.141, 3.246, 3.351, 3.442, 3.555, 3.652, 3.751, 3.84, 3.916, 3.987, 4.047, 4.108, 4.168, 4.236, 4.299, 4.372] },
  { n: "This perfume is sweet", c: "#1a4f98", x: [0, 6.5, 13.3, 19.8, 26.6, 32.1, 37.9, 43.6, 49.3, 55.9, 62.3, 68.8, 75.5, 81.5, 87.7, 93.7, 100], y: [3.421, 3.482, 3.55, 3.613, 3.681, 3.738, 3.799, 3.861, 3.922, 3.995, 4.066, 4.136, 4.204, 4.267, 4.335, 4.398, 4.472] },
  { n: "This fragrance has a strong personality", c: "#ff8080", x: [0, 6.1, 12.1, 18.3, 24.3, 31.2, 38.7, 45.9, 53.3, 59, 65, 70.8, 76.7, 82.5, 88.3, 94.2, 100], y: [3.222, 3.301, 3.372, 3.44, 3.503, 3.579, 3.657, 3.728, 3.799, 3.861, 3.924, 3.982, 4.039, 4.102, 4.176, 4.257, 4.346] },
  { n: "This fragrance is fruity", c: "#e6e9d2", x: [0, 7, 14.2, 21.5, 28.7, 39.2, 44.8, 50, 56, 62, 68.3, 74.3, 80.3, 87, 93.4, 100], y: [3.283, 3.393, 3.482, 3.563, 3.639, 3.757, 3.804, 3.856, 3.913, 3.972, 4.026, 4.092, 4.15, 4.21, 4.262, 4.315] },
  { n: "The intensity of this fragrance", c: "#ffbf20", x: [0, 6.2, 12.5, 18.9, 25.1, 31.3, 37.5, 43.7, 49.9, 56.1, 62.3, 68.6, 74.8, 81, 87.3, 93.5, 100], y: [2.772, 2.971, 3.154, 3.335, 3.5, 3.647, 3.778, 3.882, 3.94, 3.937, 3.874, 3.746, 3.592, 3.416, 3.225, 3.026, 2.811] },
  { n: "This fragrance is woody", c: "#e2502c", x: [0, 6.2, 12.8, 19.3, 25.5, 31.2, 36.5, 42, 47.5, 54.3, 60.8, 67.5, 74, 80.4, 87.1, 93.5, 100], y: [3.7, 3.746, 3.786, 3.825, 3.861, 3.898, 3.932, 3.966, 4.003, 4.047, 4.097, 4.152, 4.215, 4.28, 4.362, 4.451, 4.548] },
  { n: "This perfume is spicy", c: "#35bf2f", x: [0, 6.2, 12.8, 19.3, 25.7, 30.8, 35.8, 40.7, 45.9, 52, 58, 64.3, 70.5, 77.8, 85.3, 92.5, 100], y: [3.652, 3.73, 3.788, 3.838, 3.877, 3.908, 3.937, 3.958, 3.982, 4.005, 4.024, 4.047, 4.068, 4.089, 4.11, 4.131, 4.15] },
];

const CurveChart = () => {
  const X = (v: number) => 67.5 + v * 3.324;
  const Y = (v: number) => 398.5 - (v - 2.4) * 150.9;
  return (
    <svg width="466" height="464" viewBox="0 0 466 464" fontFamily={UI} role="img" aria-label="Target mean curves">
      <text x="34" y="33" fontSize="10">Would you say that you like the fragrance Mean</text>
      <path d={`M67.500 66.500V398.500H400${TICKS.map((v) => `M63 ${Y(v)}h4.500`).join("")}${[...Array(11)].map((_, i) => `M${X(i * 10)} 398.500v4`).join("")}`} stroke="#a0a0a0" fill="none" />
      {TICKS.map((v) => (
        <text key={v} x="61" y={Math.round(Y(v) + 4)} fontSize="9" textAnchor="end" fill="#222">{v.toFixed(1)}</text>
      ))}
      {[...Array(11)].map((_, i) => (
        <text key={i} x={X(i * 10)} y="411" fontSize="9" textAnchor="middle" fill="#222">{i * 10}</text>
      ))}
      {[...CURVES].sort((a, b) => Number(b.c === "#eeeeee") - Number(a.c === "#eeeeee")).map((s) => (
        <g key={s.n} fill={s.c}>
          <polyline points={s.x.map((x, i) => `${X(x)},${Y(s.y[i])}`).join(" ")} fill="none" stroke={s.c} strokeWidth="1" />
          {s.x.map((x, i) => <circle key={x} cx={X(x)} cy={Y(s.y[i])} r="1.900" />)}
        </g>
      ))}
      <text x="433" y="434" fontSize="10" textAnchor="end">Normalized Variable Mean</text>
    </svg>
  );
};

/* ---------- page ---------- */

const TABS: [string, string][] = [["1", "#b02a2e"], ["2", "#ff9fce"], ["3", "#ffff00"], ["4", "#2e9e66"], ["5", "#eeeeee"], ["6", "#10c8ff"]];

export default function App() {
  return (
    <Shell>
      <Global />
      <MenuBar>
        {["Network", "Data", "Edit", "View", "Hellixia", "Learning", "Inference", "Analysis", "Monitor", "Tools", "Window", "Help"].map((m) => (
          <MenuItem key={m}>{m}</MenuItem>
        ))}
      </MenuBar>
      <ToolBar>
        {GROUPS.map((g, i) => (
          <React.Fragment key={i}>
            <Grip $w={i ? 16 : 8} />
            {g.map((t) => (
              <ToolButton key={t.n} $on={t.on} aria-label={t.n} aria-pressed={t.on}>
                <Ico>{t.i}</Ico>
                {t.menu && <Caret />}
              </ToolButton>
            ))}
          </React.Fragment>
        ))}
        <Grip />
      </ToolBar>
      <FrameTitle>
        <Dots>
          <FrameDot $c="#fb5f5b" aria-label="Close graph">
            <Ico s={8}><path d="M4 4l12 12M16 4L4 16" stroke="#6d0808" strokeWidth="3.500" /></Ico>
          </FrameDot>
          {["Minimise graph", "Restore graph"].map((n) => (
            <FrameDot key={n} $c="#fdbb2d" aria-label={n}>
              <Ico s={8}><path d="M2 10h16" stroke="#9a5b00" strokeWidth="3" /></Ico>
            </FrameDot>
          ))}
        </Dots>
        <FrameName>
          <Ico s={14}>
            <path d="M8 0h8l4 4v16H8z" fill="#dadada" />
            <path d="M3 4v12L16 5" stroke="#27519a" strokeWidth="2" />
            <circle cx="3" cy="4" r="3" fill="#27519a" /><circle cx="4" cy="16" r="3" fill="#27519a" /><circle cx="15" cy="5" r="3" fill="#27519a" />
          </Ico>
          Associated graph 3.xbl
        </FrameName>
        <span />
      </FrameTitle>

      <Work>
        <Canvas><Graph /></Canvas>
        <Side>
          <Stats>
            <div>
              {["Joint Probability: 100.00%", "Log–Loss: 0", "Cases: 120", "Total Value: 206.953", "Mean Value: 6.087"].map((s) => <div key={s}>{s}</div>)}
            </div>
            <Up aria-label="Scroll up" />
          </Stats>
          <Monitors>
            {COLUMNS.map((c, i) => (
              <Column key={i}>
                {c.map((d, j) => <Monitor key={j} d={d} />)}
              </Column>
            ))}
          </Monitors>
        </Side>
      </Work>

      <StatusBar>
        <ToolButton aria-label="Arc mode">
          <Ico s={18}>
            <path d="M4 5l12 10" stroke="#16325e" strokeWidth="1.500" />
            <path d="M14 15l-6-1 4-5z" fill="#16325e" />
            <circle cx="4" cy="5" r="2.500" fill="#3558a8" /><circle cx="17" cy="16" r="2.500" fill="#3558a8" />
          </Ico>
        </ToolButton>
        <span>&nbsp;</span>
        <ToolButton $on aria-label="Comment mode" aria-pressed>
          <Ico s={18}>
            <rect x="1" y="3" width="18" height="14" fill="#e9f3ff" stroke="#2b74c4" strokeWidth="2" />
            <path d="M4 7h12M4 10h12M4 13h8" stroke="#2b74c4" strokeWidth="1.500" />
          </Ico>
        </ToolButton>
        <Knob />
        <Rail />
        <Tray>
          <span>0:0</span>
          <Ico s={18}><path d="M1 0v20h19" stroke="#9ab" /><path d="M2 20c6-3 4-15 8-15s2 12 8 15z" fill="#27c4e8" stroke="#1188b0" /></Ico>
          <Ico s={18}><path d="M1 8v8c0 4 12 4 12 0V8zM6 3v12c0 4 13 4 13 0V3z" fill="#e9a91c" /><ellipse cx="12.500" cy="3.500" rx="6.500" ry="3" fill="#ffd758" /><path d="M1 12c0 4 12 4 12 0M7 7c0 3 12 3 12 0M7 11c0 3 12 3 12 0" stroke="#ffe07a" /></Ico>
          <Ico s={18}><path d="M10 1c14 0 8 10 4 12l-2 6H8l-2-6C2 11-4 1 10 1z" fill="#fff" stroke="#1f2f55" strokeWidth="1.500" /><circle cx="6.500" cy="7" r="2.500" fill="#27519a" /><circle cx="13.500" cy="7" r="2.500" fill="#27519a" /><circle cx="10" cy="14" r="2" fill="#27519a" /></Ico>
          <Ico s={18}><path d="M1 19L18 3" stroke="#16325e" strokeWidth="2.500" /><path d="M20 0v8l-8-8z" fill="#16325e" /><g transform="translate(3 3) scale(.7)">{NoEntry}</g></Ico>
          <Ico s={18}>{Db}</Ico>
          <Ico s={18}>{NoEntry}{Clip}</Ico>
        </Tray>
      </StatusBar>
      <TaskBar>
        <Task>
          <TaskIcon>
            <Ico s={20}>
              <circle cx="10" cy="10" r="9.500" fill="#22dd55" />
              <path d="M10 1v10" stroke="#0a4a1a" strokeWidth="1.500" />
              <circle cx="10" cy="10" r="7.500" stroke="#0a2a12" strokeWidth="2" strokeDasharray="1.500 4.390" />
            </Ico>
          </TaskIcon>
          Associated g...
        </Task>
        <Corner aria-label="Show panel">
          <Ico s={16}><path d="M17 0v20L4 10z" fill="#3fa5a9" /></Ico>
        </Corner>
      </TaskBar>

      <Win $x={1039} $y={27} $w={855} $h={772}>
        <WinBar>
          <Dots>
            <Light $c="#ff5d59" aria-label="Close" /><Light $c="#fcba2c" aria-label="Minimise" /><Light $c="#2dc840" aria-label="Zoom" />
          </Dots>
          <WinTitle>Posterior Probability Analysis of Would you say that you like the fragrance (Associated graph 3)</WinTitle>
          <span />
        </WinBar>
        <WinTools>
          <ToolIcon aria-label="Save"><Ico s={15}>{Disk}</Ico></ToolIcon>
          <ToolIcon aria-label="Print"><Ico s={15}>{Printer}</Ico></ToolIcon>
        </WinTools>
        <TabBar role="tablist">
          <Tab role="tab" $wide>Would you say that you like the fragrance</Tab>
          {TABS.map(([t, c]) => <Tab role="tab" key={t}><Swatch $c={c} />{t}</Tab>)}
          <Tab role="tab" $on aria-selected><Swatch $c="#008f00" />Mean</Tab>
        </TabBar>
        <Group>
          <Panes $boxed>
            <Pane $h={61} />
            <Split $side={222}>
              <Pane><RangeChart /></Pane>
              <Pane>
                <Legend>
                  <legend>Would you say that you like the fragrance</legend>
                  <LegendList $h={15}>
                    <li><LegendItem><Check type="checkbox" /><Swatch $c="#008f00" />Mean (3.9246)</LegendItem></li>
                  </LegendList>
                </Legend>
              </Pane>
            </Split>
          </Panes>
        </Group>
        <WinFoot $h={52} $drop={10}>
          <Push $kind="blue">Close</Push>
        </WinFoot>
      </Win>

      <Win $x={532} $y={438} $w={746} $h={620}>
        <WinBar>
          <Dots>
            <Light $c="#ff5d59" aria-label="Close" /><Light $c="#dcdcdc" aria-label="Minimise" /><Light $c="#2dc840" aria-label="Zoom" />
          </Dots>
          <WinTitle>Target Mean Analysis</WinTitle>
          <span />
        </WinBar>
        <Panes>
          <Pane $h={73}>
            <Readout>
              <div>Node:</div>
              <div>x:</div>
              <div>y:</div>
            </Readout>
          </Pane>
          <Split $side={266}>
            <Pane><CurveChart /></Pane>
            <Pane>
              <Legend>
                <legend>Variables</legend>
                <LegendList $h={175}>
                  <li><LegendItem $italic><Check type="checkbox" /><Swatch $c="transparent" />All Curves</LegendItem></li>
                  {CURVES.map((s) => (
                    <li key={s.n}><LegendItem><Check type="checkbox" /><Swatch $c={s.c} />{s.n}</LegendItem></li>
                  ))}
                </LegendList>
              </Legend>
            </Pane>
          </Split>
        </Panes>
        <WinFoot $h={41}>
          <Push $kind="ring">Close</Push>
          <Push>Save</Push>
        </WinFoot>
      </Win>
    </Shell>
  );
}
